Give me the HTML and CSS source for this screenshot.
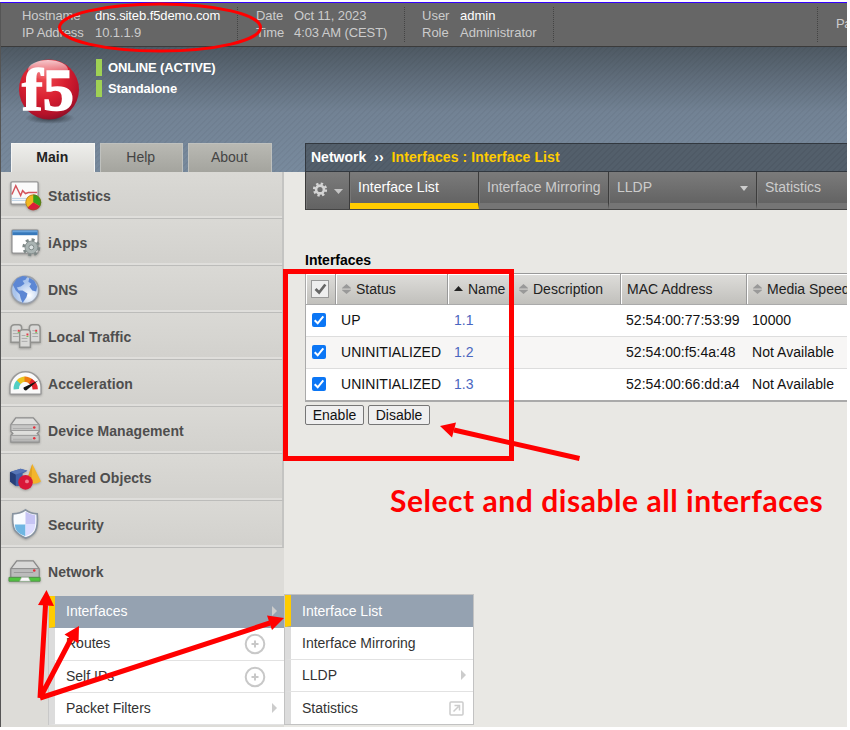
FILE: index.html
```html
<!DOCTYPE html>
<html lang="en">
<head>
<meta charset="utf-8">
<title>BIG-IP - Interface List</title>
<link rel="stylesheet" href="styles.css">
</head>
<body>
<div class="screen">
  <header class="topbar">
    <dl class="info host"><dt>Hostname</dt><dd class="strong">dns.siteb.f5demo.com</dd><dt>IP Address</dt><dd>10.1.1.9</dd></dl>
    <dl class="info date"><dt>Date</dt><dd>Oct 11, 2023</dd><dt>Time</dt><dd>4:03 AM (CEST)</dd></dl>
    <dl class="info user"><dt>User</dt><dd class="strong">admin</dd><dt>Role</dt><dd>Administrator</dd></dl>
    <div class="partition">Pa</div>
  </header>

  <div class="banner">
    <div class="brand">
      <svg class="logo" width="66" height="66" viewBox="0 0 66 66">
        <defs>
          <radialGradient id="ball" cx=".42" cy=".3" r=".72"><stop offset="0" stop-color="#ee4a50"/><stop offset=".5" stop-color="#d81f30"/><stop offset=".85" stop-color="#b5122a"/><stop offset="1" stop-color="#8e1028"/></radialGradient>
          <linearGradient id="shine" x2="0" y2="1"><stop offset="0" stop-color="#fff" stop-opacity=".75"/><stop offset="1" stop-color="#fff" stop-opacity="0"/></linearGradient>
          <radialGradient id="shade"><stop offset="0" stop-color="#20262c" stop-opacity=".8"/><stop offset="1" stop-color="#20262c" stop-opacity="0"/></radialGradient>
        </defs>
        <ellipse cx="34" cy="60" rx="25" ry="6" fill="url(#shade)"/>
        <circle cx="33" cy="31.500" r="30" fill="url(#ball)"/>
        <ellipse cx="32" cy="12" rx="20" ry="10" fill="url(#shine)"/>
        <text class="logo-text" x="6" y="52" textLength="52" lengthAdjust="spacingAndGlyphs">f5</text>
      </svg>
      <div class="status"><p>ONLINE (ACTIVE)</p><p>Standalone</p></div>
    </div>
    <div class="banner-foot">
      <nav class="side-tabs"><a class="on">Main</a><a>Help</a><a>About</a></nav>
      <div class="crumbs"><span>Network</span><span class="sep">››</span><span class="here">Interfaces : Interface List</span></div>
    </div>
  </div>

  <div class="body">
    <aside class="sidebar">
      <ul class="modules">
        <li><svg viewBox="0 0 36 36"><rect x="3" y="4" width="28" height="23" rx="1.5" fill="#fafafa" stroke="#999" stroke-width="1.5"/><path d="M4 21h26M4 23h26" stroke="#b9cfe4"/><path d="M4 17l4-9 5 10 2-5 3 3 3-1h9" fill="none" stroke="#d4545c" stroke-width="1.5"/><circle cx="26" cy="25" r="8" fill="#f2b820"/><path d="M26 25V17a8 8 0 0 1 7 12z" fill="#35a01b"/><path d="M26 25l7 4a8 8 0 0 1-13 1.500z" fill="#d81e3a"/><circle cx="26" cy="25" r="7.700" fill="none" stroke="#8c5a20" stroke-opacity=".55"/></svg>Statistics</li>
        <li><svg viewBox="0 0 36 36"><rect x="4" y="5" width="27" height="24" rx="1.500" fill="#fff" stroke="#979797" stroke-width="1.500"/><path d="M4.500 5.500h26v5h-26z" fill="#3879bb"/><path d="M5 6h25v1.500H5z" fill="#6aa4dc"/><circle cx="24" cy="23" r="7.500" fill="none" stroke="#7f8988" stroke-width="3.500" stroke-dasharray="3 2.890"/><circle cx="24" cy="23" r="6.500" fill="#aab4b3" stroke="#87918f"/><circle cx="24" cy="23" r="2.500" fill="#dbe1e1" stroke="#7f8988"/></svg>iApps</li>
        <li><svg viewBox="0 0 36 36"><defs><radialGradient id="globe" cx=".65" cy=".7"><stop offset="0" stop-color="#fff"/><stop offset="1" stop-color="#aac5ed"/></radialGradient></defs><circle cx="17.500" cy="18.500" r="14" fill="url(#globe)" stroke="#999fa9" stroke-width="1.600"/><path d="M5 13l4-6 6-3 5 1-2 3-3 1 2 3-4 3-4 1 2 3 4 0 5 3-1 4-4 6-2-5-1-4-4-4zM22 6l5 3 3 6-1 5-4-1-3-4 2-3-3-2z" fill="#5d87d4"/></svg>DNS</li>
        <li><svg viewBox="0 0 36 36"><g fill="#d9d9d7" stroke="#92928f" stroke-width="1.500"><path d="M3 10q0-4 4-4h4q3 0 3 3v15H3zM22 9q0-3 3-3h5q3 0 3 4v14H22z"/><path d="M12 14q0-3 3-3h5q3 0 3 3v15H12z"/></g><path d="M5 12h4M5 15h6M5 18h6M14 17h4M14 20h6M14 23h6M25 12h3M25 15h6M25 18h6" stroke="#aaa"/><path d="M10 11h2v2h-2zM19 15h2v2h-2zM28 11h2v2h-2z" fill="#e33c47"/><path d="M10 14h2M19 18h2M28 14h2" stroke="#6dbf53"/></svg>Local Traffic</li>
        <li><svg viewBox="0 0 36 36"><path d="M2 28V22a16 16 0 0 1 32 0v6q0 1-1 1H3q-1 0-1-1z" fill="#fafafa" stroke="#999" stroke-width="1.500"/><g fill="none" stroke-width="5.500"><path d="M8.500 24a10 10 0 0 1 3-8" stroke="#51cfc3"/><path d="M11 16.500a10 10 0 0 1 7-3" stroke="#eac420"/><path d="M17 13.500a10 10 0 0 1 7 3" stroke="#f07b12"/><path d="M23 15.500a10 10 0 0 1 5 8.500" stroke="#e2222c"/></g><path d="M31 15L19 25a2.500 2.500 0 0 1-3-3z" fill="#111"/></svg>Acceleration</li>
        <li><svg viewBox="0 0 36 36"><path d="M3 12l5-7h18l6 7v7l-2 2 2 2v7H3v-7l2-2-2-2z" fill="#dededc" stroke="#8c8c8c" stroke-width="1.300"/><path d="M3 12h29v6H3zM3 23h29v6H3z" fill="#c6c6c5" stroke="#999"/><path d="M5 16h20M5 27h20" stroke="#aaa"/><circle cx="27" cy="15" r="1.300" fill="#e4303c"/><circle cx="27" cy="26" r="1.300" fill="#e4303c"/></svg>Device Management</li>
        <li><svg viewBox="0 0 36 36"><path d="M3 12l10-3 7 2-5 3v12l-6 1-7-5z" fill="#3f60a6"/><path d="M2 12l6 3v12l-6-5z" fill="#273f79"/><path d="M3 12l10-3 7 2-12 4z" fill="#5775b6"/><path d="M25 4l9 18q-8 5-15 0z" fill="#f3b52c"/><path d="M25 4l-6 18 5 2z" fill="#dfa022"/><circle cx="18" cy="23" r="7.500" fill="#d91638"/><circle cx="19.500" cy="22" r="2" fill="#ee7c90"/></svg>Shared Objects</li>
        <li><svg viewBox="0 0 36 36"><path d="M18 3q5 4 12 4 1 13-2 18-3 5-10 7Q11 29 7 24 4 18 5 7q8 0 13-4z" fill="#f8fbff" stroke="#8793a0" stroke-width="1.700"/><path d="M18 5q5 3 10 3.500V18H18z" fill="#c6c4f4"/><path d="M18 18v12Q7 27 7 18z" fill="#6fb6e2"/><path d="M18 18h10q0 9-10 12z" fill="#dcdcff"/></svg>Security</li>
        <li class="open"><svg viewBox="0 0 36 36"><path d="M3 14l6-8h17l6 8v9H3z" fill="#d8d8d7" stroke="#888" stroke-width="1.300"/><path d="M3 14h29v9H3z" fill="#bbb" stroke="#888"/><path d="M6 18h20" stroke="#999"/><circle cx="27" cy="16" r="1.300" fill="#e4303c"/><path d="M1 23h32v4H1z" fill="#51c440" stroke="#54924b"/><path d="M12 27l2-4h7l2 4z" fill="#fafafa" stroke="#aaa" stroke-width=".6"/></svg>Network</li>
      </ul>
      <ul class="submenu">
        <li class="on">Interfaces<i class="caret"></i></li>
        <li>Routes<svg class="plus" viewBox="0 0 22 22"><circle cx="11" cy="11" r="9.300"/><path d="M7.500 11h7M11 7.500v7"/></svg></li>
        <li>Self IPs<svg class="plus" viewBox="0 0 22 22"><circle cx="11" cy="11" r="9.300"/><path d="M7.500 11h7M11 7.500v7"/></svg></li>
        <li>Packet Filters<i class="caret"></i></li>
      </ul>
    </aside>

    <main class="content">
      <nav class="page-tabs">
        <a class="gear"><svg width="32" height="18" viewBox="0 0 32 18"><circle cx="8" cy="7.500" r="5.800" fill="none" stroke="#d4d4d4" stroke-width="2.600" stroke-dasharray="2.300 2.255"/><circle cx="8" cy="7.500" r="3.900" fill="none" stroke="#d4d4d4" stroke-width="2.600"/><path d="M22 7h9l-4.500 5z" fill="#c4c4c4"/></svg></a>
        <a class="list on">Interface List</a>
        <a class="mirror">Interface Mirroring</a>
        <a class="lldp">LLDP<i class="drop"></i></a>
        <a class="stats">Statistics</a>
      </nav>
      <h1>Interfaces</h1>
      <table>
        <colgroup><col class="c1"><col class="c2"><col class="c3"><col class="c4"><col class="c5"><col class="c6"></colgroup>
        <thead><tr>
          <th class="pick"><span class="checkall"><svg viewBox="0 0 18 18"><path d="M4 9l4 4 7-9" fill="none" stroke="#666" stroke-width="3"/></svg></span></th>
          <th><i class="sort"></i>Status</th>
          <th><i class="sort asc"></i>Name</th>
          <th><i class="sort"></i>Description</th>
          <th>MAC Address</th>
          <th><i class="sort"></i>Media Speed</th>
        </tr></thead>
        <tbody>
          <tr><td><span class="check"><svg viewBox="0 0 14 14"><path d="M2.700 7.300l3 3 5.600-7"/></svg></span></td><td>UP</td><td class="link">1.1</td><td></td><td>52:54:00:77:53:99</td><td>10000</td></tr>
          <tr><td><span class="check"><svg viewBox="0 0 14 14"><path d="M2.700 7.300l3 3 5.600-7"/></svg></span></td><td>UNINITIALIZED</td><td class="link">1.2</td><td></td><td>52:54:00:f5:4a:48</td><td>Not Available</td></tr>
          <tr><td><span class="check"><svg viewBox="0 0 14 14"><path d="M2.700 7.300l3 3 5.600-7"/></svg></span></td><td>UNINITIALIZED</td><td class="link">1.3</td><td></td><td>52:54:00:66:dd:a4</td><td>Not Available</td></tr>
        </tbody>
      </table>
      <div class="actions"><button>Enable</button><button>Disable</button></div>
    </main>

    <ul class="submenu flyout">
      <li class="on">Interface List</li>
      <li>Interface Mirroring</li>
      <li>LLDP<i class="caret"></i></li>
      <li>Statistics<svg class="popout" viewBox="0 0 15 15"><rect x="1" y="1" width="13" height="13" rx="1"/><path d="M4.500 10.500l5-5M5.500 4.500h5v5"/></svg></li>
    </ul>
  </div>
</div>

<svg class="marks" width="850" height="730" viewBox="0 0 850 730">
  <ellipse cx="160" cy="27.500" rx="100.500" ry="23.500" stroke-width="3"/>
  <rect x="285.500" y="271.500" width="226" height="187" stroke-width="5"/>
  <path d="M579.500 458.500L454 430M40 698L45.500 605M40 698L72 637M40 698L270 623" stroke-width="5"/>
  <path class="head" d="M440 426l16-3.500-4 15zM46.500 590l7.500 16-16-1zM79 626l-.5 17.500-14-9zM284 618l-17-2.500 5 14.500z"/>
</svg>
<p class="note">Select and disable all interfaces</p>
</body>
</html>
```
FILE: styles.css
```css
* { box-sizing: border-box; }
body { margin: 0; width: 850px; height: 730px; overflow: hidden; position: relative; background: #fff; font: 14px "Liberation Sans", Arial, sans-serif; color: #222; }
ul, dl, dd, p, h1 { margin: 0; padding: 0; list-style: none; }

.screen { width: 847px; height: 725px; margin-top: 2px; border-top: 1px solid #30f; border-left: 1px solid #555; overflow: hidden; background: #e9e8e4; display: flex; flex-direction: column; }

.topbar { height: 44px; flex: none; background: #666; border-bottom: 1px solid #3b3b3b; display: flex; padding-top: 4px; color: #ccc; font-size: 13px; line-height: 17px; white-space: nowrap; }
.info { display: grid; height: 35px; align-content: start; border-right: 1px dotted #444; }
.host { grid-template-columns: 73px 1fr; width: 237px; padding-left: 21px; letter-spacing: -.1px; }
.date { grid-template-columns: 38px 1fr; width: 167px; padding-left: 18px; letter-spacing: -.1px; }
.user { grid-template-columns: 38px 1fr; width: 149px; padding-left: 17px; }
.strong { color: #fff; }
.partition { margin-left: auto; width: 30px; height: 35px; padding: 8px 0 0 18px; border-left: 1px dotted #444; letter-spacing: -.5px; }

.banner { height: 125px; flex: none; display: flex; flex-direction: column; justify-content: space-between; background: repeating-linear-gradient(135deg, rgba(0,0,0,.035) 0 1.500px, transparent 1.500px 4.243px), linear-gradient(#4e5963, #728294 65px, #788a9d); }
.brand { display: flex; padding: 11px 0 0 15px; }
.logo { overflow: visible; }
.logo-text { font: bold 60px "Liberation Serif", serif; fill: #fff; stroke: #fff; stroke-width: 1.500px; }
.status { margin-left: 14px; color: #fff; font-weight: bold; font-size: 13px; }
.status p { border-left: 6px solid #9fd154; height: 17px; line-height: 17px; margin: 1px 0 4px; padding-left: 6px; white-space: nowrap; letter-spacing: -.1px; }
.banner-foot { display: flex; height: 29px; }
.side-tabs { width: 304px; display: flex; gap: 5px; padding-left: 10px; }
.side-tabs a { width: 83.500px; text-align: center; line-height: 27px; background: linear-gradient(#b9b9b3, #a4a49e); border: 1px solid #bfc1be; border-bottom: 0; color: #444; padding-right: 1px; }
.side-tabs .on { background: linear-gradient(#eeeeeb, #dbdad6); border-color: #f5f5f3; color: #222; font-weight: bold; }
.crumbs { flex: 1; border: 1px solid #32383f; border-right: 0; background: repeating-linear-gradient(135deg, rgba(0,0,0,.05) 0 1.500px, transparent 1.500px 4.243px), #535f6b; color: #fff; font-weight: bold; line-height: 26px; padding-left: 5px; display: flex; white-space: nowrap; }
.sep { margin: 0 8px; }
.here { color: #fc0; letter-spacing: .09px; }

.body { flex: 1; min-height: 0; display: flex; position: relative; }
.sidebar { width: 283px; flex: none; background: #dddcd8; }
.modules li { height: 47px; display: flex; align-items: center; gap: 5px; padding: 1px 0 0 7px; letter-spacing: .07px; font-weight: bold; color: #4e4e4e; background: linear-gradient(#dad9d5, #d2d1cd); border-right: 2px solid #c4c4c2; border-bottom: 1px solid #bcbcba; box-shadow: inset 0 -2px #dfdedb; }
.modules svg { width: 35px; height: 35px; filter: drop-shadow(0 1px 1px rgba(0,0,0,.25)); }
.modules .open { background: none; border: 0; box-shadow: none; height: 48px; padding-top: 0; }
.submenu { display: grid; grid-auto-rows: 32.300px; margin-left: 47px; border-left: 1px solid #c8c8c8; background: #fff; color: #333; }
.submenu li { position: relative; display: flex; align-items: center; justify-content: space-between; border-left: 6px solid #dcdcdc; border-bottom: 1px solid #e2e2e2; padding: 0 7px 1px 11px; }
.submenu .on { background: #95a2b1; color: #fff; border-left-color: #fc0; border-bottom-color: #95a2b1; }
.caret { border: 5px solid transparent; border-left-color: #ccc; border-right: 0; }
.plus { width: 22px; height: 22px; margin: 2px 11px 0 0; fill: none; stroke: #c8c8c8; stroke-width: 2; }
.flyout { position: absolute; left: 283px; top: 422px; width: 190px; margin: 0; border: 1px solid #c2c2c2; }
.flyout li { padding-bottom: 0; }
.flyout li:last-child { border-bottom: 0; }
.popout { width: 15px; height: 15px; margin-right: 2px; fill: none; stroke: #ccc; stroke-width: 1.500; }

.content { flex: 1; min-width: 0; padding-left: 21px; overflow: hidden; }
.page-tabs { display: flex; height: 38px; border-left: 1px solid #3b3b3b; border-bottom: 1px solid #444; background: #666; line-height: 31px; color: #ccc; white-space: nowrap; }
.page-tabs a { flex: none; padding-left: 8px; border-right: 1px solid #3c3c3c; border-bottom: 6px solid #757575; background: linear-gradient(#7b7b7b, #636363); box-shadow: inset 1px 0 #777; }
.page-tabs .gear { width: 44px; padding: 10px 0 0 6px; border-bottom: 0; line-height: 0; }
.page-tabs .list { width: 129px; }
.page-tabs .on { color: #fff; border-bottom-color: #fc0; letter-spacing: .05px; }
.page-tabs .mirror { width: 130px; }
.page-tabs .lldp { width: 148px; display: flex; justify-content: space-between; align-items: flex-start; padding-right: 8px; }
.page-tabs .stats { width: 130px; }
.drop { border: 4.500px solid transparent; border-top: 5px solid #ccc; border-bottom: 0; margin-top: 14px; }
h1 { margin-top: 41px; font-size: 14px; line-height: 18px; color: #000; height: 22px; }
table { table-layout: fixed; width: 560px; border-collapse: separate; border-spacing: 0; border-left: 1px solid #aaa; border-bottom: 2px solid #aaa; background: #fff; }
.c1 { width: 30px; } .c2 { width: 112px; } .c3 { width: 65px; } .c4 { width: 108px; } .c5 { width: 126px; } .c6 { width: 118px; }
th { height: 32px; padding: 0 0 0 6px; text-align: left; font-weight: normal; white-space: nowrap; background: linear-gradient(#deddda, #c1c0bc); border-top: 1px solid #999; border-right: 1px solid #999; border-bottom: 1px solid #aaa; box-shadow: inset 1px 1px #fff; }
td { height: 32px; padding: 0 0 1px 5px; border-bottom: 1px solid #ddd; white-space: nowrap; color: #111; letter-spacing: .04px; }
tbody tr:nth-child(2) { background: #f7f6f5; }
tbody tr:last-child td { border-bottom: 0; height: 31px; }
td.link { color: #4a66c0; padding-left: 6px; }
.pick { padding-left: 5px; }
.checkall { display: block; width: 18px; height: 18px; border: 1px solid #999; background: #eee; }
.checkall svg { display: block; width: 16px; height: 16px; }
.check { display: block; width: 14px; height: 14px; margin: -1px 0 0 1px; border-radius: 2px; background: #0b76f5; }
.check svg { display: block; fill: none; stroke: #fff; stroke-width: 2; }
.sort { display: inline-block; width: 9px; height: 10px; margin-right: 5px; background: #999; clip-path: polygon(0 40%, 50% 0, 100% 40%, 100% 45%, 0 45%, 0 58%, 100% 58%, 100% 62%, 50% 100%, 0 62%, 0 40%); }
.asc { background: #222; clip-path: polygon(0 70%, 50% 20%, 100% 70%); }
.actions { display: flex; gap: 4px; margin-top: 3px; }
button { height: 20px; padding: 0 6.700px; border: 1px solid #767676; border-radius: 2px; background: #efefef; font: 14px "Liberation Sans", Arial, sans-serif; color: #111; line-height: 18px; }

.marks { position: absolute; left: 0; top: 0; fill: none; stroke: #f00; }
.head { fill: #f00; stroke: none; }
.note { position: absolute; left: 390px; top: 482px; font: bold 30px/36px Lato, sans-serif; letter-spacing: .54px; color: #f00; white-space: nowrap; }
```
